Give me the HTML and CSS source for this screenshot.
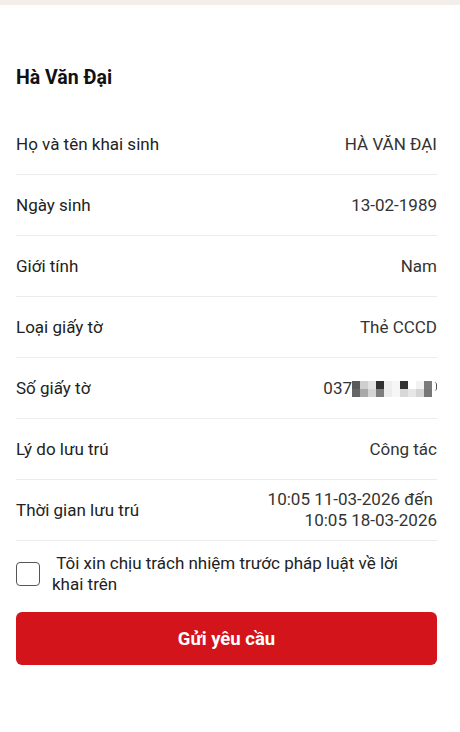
FILE: index.html
```html
<!DOCTYPE html>
<html lang="vi">
<head>
    <meta charset="UTF-8">
    <meta name="viewport" content="width=device-width, initial-scale=1.0">
    <title>Thông tin lưu trú</title>
    <link rel="stylesheet" href="styles.css">
</head>
<body>
    <div class="topbar"></div>

    <div class="content">
        <h2 class="person-name">Hà Văn Đại</h2>

        <div class="info-list">
            <div class="info-row">
                <span class="label">Họ và tên khai sinh</span>
                <span class="value">HÀ VĂN ĐẠI</span>
            </div>
            <div class="info-row">
                <span class="label">Ngày sinh</span>
                <span class="value">13-02-1989</span>
            </div>
            <div class="info-row">
                <span class="label">Giới tính</span>
                <span class="value">Nam</span>
            </div>
            <div class="info-row">
                <span class="label">Loại giấy tờ</span>
                <span class="value">Thẻ CCCD</span>
            </div>
            <div class="info-row">
                <span class="label">Số giấy tờ</span>
                <span class="value masked">037<span class="mosaic">
                    <i style="background:#5a5a5a"></i><i style="background:#cfcfcf"></i><i style="background:#e2e2e2"></i><i style="background:#303030"></i><i style="background:#eeeeee"></i><i style="background:#f6f6f6"></i><i style="background:#333333"></i><i style="background:#ffffff"></i><i style="background:#f2f2f2"></i><i style="background:#7a7a7a"></i>
                    <i style="background:#666666"></i><i style="background:#a9a9a9"></i><i style="background:#d4d4d4"></i><i style="background:#7d7d7d"></i><i style="background:#ececec"></i><i style="background:#f6f6f6"></i><i style="background:#d8d8d8"></i><i style="background:#e6e6e6"></i><i style="background:#d4d4d4"></i><i style="background:#777777"></i>
                </span><span class="tail"></span></span>
            </div>
            <div class="info-row">
                <span class="label">Lý do lưu trú</span>
                <span class="value">Công tác</span>
            </div>
            <div class="info-row">
                <span class="label">Thời gian lưu trú</span>
                <span class="value">10:05 11-03-2026 đến&nbsp;<br>10:05 18-03-2026</span>
            </div>
        </div>

        <label class="confirm">
            <input type="checkbox" class="confirm-box">
            <span class="confirm-text">&nbsp;Tôi xin chịu trách nhiệm trước pháp luật về lời khai trên</span>
        </label>

        <button type="button" class="submit-btn">Gửi yêu cầu</button>
    </div>
</body>
</html>
```

FILE: styles.css
```css
body {
    margin: 0;
    font-family: Roboto, "Noto Sans", Arial, sans-serif;
    color: #222;
    background: #fff;
}
.topbar {
    height: 5px;
    background-color: #f3eee9;
}
.content {
    padding: 0 23px 0 16px;
}
.person-name {
    margin: 0;
    padding-top: 61px;
    font-size: 19.5px;
    line-height: 24px;
    font-weight: 700;
    color: #111;
}
.info-list {
    margin-top: 24px;
}
.info-row {
    display: flex;
    justify-content: space-between;
    align-items: center;
    height: 60px;
    border-bottom: 1px solid #ececec;
    font-size: 17px;
}
.label {
    color: #222;
}
.value {
    color: #333;
    text-align: right;
    line-height: 21px;
}
.masked {
    display: flex;
    align-items: center;
}
.mosaic {
    display: grid;
    grid-template-columns: repeat(10, 8px);
    grid-auto-rows: 8px;
    margin-top: 2px;
}
.mosaic i {
    display: block;
}
.tail {
    width: 2px;
    height: 9px;
    margin: -3px 0 0 2px;
    border-radius: 0 3px 3px 0;
    border-right: 1.5px solid #555;
}
.confirm {
    display: flex;
    align-items: center;
    gap: 12px;
    margin-top: 12px;
    padding-right: 16px;
    font-size: 17px;
    line-height: 21px;
    color: #222;
}
.confirm-box {
    appearance: none;
    -webkit-appearance: none;
    flex: none;
    width: 24px;
    height: 24px;
    margin: 0;
    border: 1.5px solid #555;
    border-radius: 4px;
    background: #fff;
}
.submit-btn {
    display: block;
    width: 100%;
    height: 53px;
    margin-top: 17px;
    border: none;
    border-radius: 6px;
    background-color: #d3141b;
    color: #fff;
    font-family: Roboto, "Noto Sans", Arial, sans-serif;
    font-size: 18.5px;
    font-weight: 700;
    cursor: pointer;
}
```
